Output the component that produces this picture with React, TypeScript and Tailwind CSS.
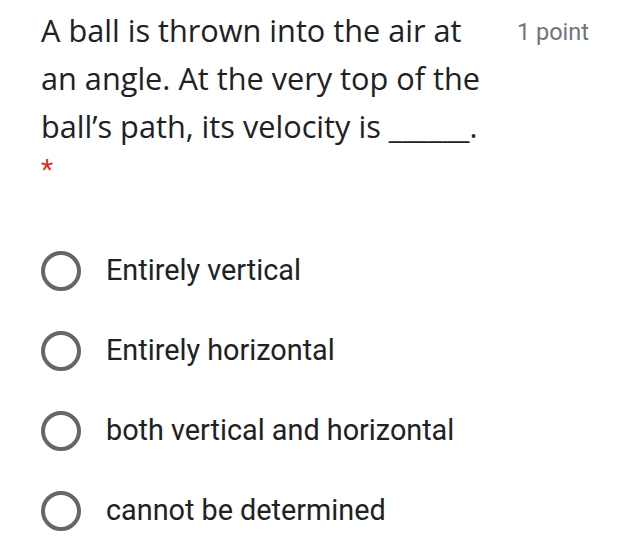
const options = [
  "Entirely vertical",
  "Entirely horizontal",
  "both vertical and horizontal",
  "cannot be determined",
];

function Radio() {
  return <div className="w-[40px] h-[40px] rounded-full border-[4px] border-[#666666] shrink-0" />;
}

export default function App() {
  return (
    <div className="w-[633px] h-[550px] bg-white overflow-hidden font-['Roboto',sans-serif]">
      <div className="flex justify-between pl-[41px] pr-[44px] pt-[6px]">
        <div className="w-[460px] text-[30.7px] leading-[48px] text-[#202124] font-['Open_Sans',sans-serif]">
          A ball is thrown into the air at an angle. At the very top of the ball’s path, its velocity is ______.
        </div>
        <div className="text-[23.5px] leading-[52px] text-[#70757a] whitespace-nowrap">1 point</div>
      </div>
      <div className="pl-[41px] text-[#d93025] text-[28px] leading-[40px] h-[40px]">*</div>
      <div className="flex flex-col pl-[41px] pt-[61px] gap-[40px]">
        {options.map((o) => (
          <div key={o} className="flex items-center gap-[25px] h-[40px]">
            <Radio />
            <span className="text-[28.8px] text-[#202124]">{o}</span>
          </div>
        ))}
      </div>
    </div>
  );
}
